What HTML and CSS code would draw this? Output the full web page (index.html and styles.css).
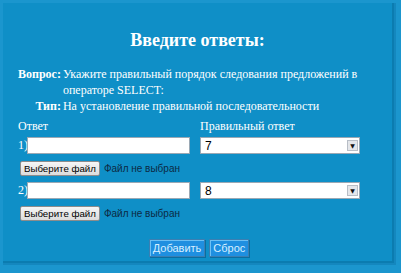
FILE: index.html
```html
<!DOCTYPE html>
<html lang="ru">
  <head>
    <meta charset="UTF-8" />
    <title>Введите ответы</title>
    <link rel="stylesheet" href="styles.css">
  </head>
  <body>
    <div class="panel">
      <h1 class="title">Введите ответы:</h1>

      <table class="info">
        <tr>
          <th>Вопрос:</th>
          <td>Укажите правильный порядок следования предложений в операторе SELECT:</td>
        </tr>
        <tr>
          <th>Тип:</th>
          <td>На установление правильной последовательности</td>
        </tr>
      </table>

      <form class="answers">
        <div class="col-head">Ответ</div>
        <div class="col-head">Правильный ответ</div>

        <div class="answer">
          <span class="num">1)</span>
          <input type="text" class="text-field">
        </div>
        <div class="select-wrap">
          <select class="pick"><option>7</option></select>
          <span class="arrow">&#9660;</span>
        </div>
        <div class="file-row">
          <button type="button" class="file-btn">Выберите файл</button>
          <span class="file-name">Файл не выбран</span>
        </div>

        <div class="answer">
          <span class="num">2)</span>
          <input type="text" class="text-field">
        </div>
        <div class="select-wrap">
          <select class="pick"><option>8</option></select>
          <span class="arrow">&#9660;</span>
        </div>
        <div class="file-row">
          <button type="button" class="file-btn">Выберите файл</button>
          <span class="file-name">Файл не выбран</span>
        </div>
      </form>

      <div class="actions">
        <button type="button" class="action-btn">Добавить</button>
        <button type="button" class="action-btn">Сброс</button>
      </div>
    </div>
  </body>
</html>
```

FILE: styles.css
```css
body {
  margin: 0;
  background-color: #1b96ce;
  font-family: "Liberation Serif", "Times New Roman", serif;
  color: #fff;
  font-size: 12px;
}
.panel {
  margin: 3px 9px 10px 3px;
  height: 258px;
  box-sizing: border-box;
  background-color: #0f8fc7;
  box-shadow: 1px 1px 0 1px #0b7cb0, 2px 2px 0 2px #1487be;
  padding: 1px 15px 0 15px;
}
.title {
  margin: 26px 0 0 0;
  text-align: center;
  font-size: 18px;
  line-height: 20px;
  font-weight: bold;
}
.info {
  border-collapse: collapse;
  margin-top: 16px;
}
.info th {
  text-align: right;
  vertical-align: top;
  padding: 0 2px 0 0;
  font-weight: bold;
  white-space: nowrap;
  line-height: 16px;
}
.info td {
  padding: 0;
  line-height: 16px;
  width: 300px;
}
.answers {
  display: grid;
  grid-template-columns: 182px 160px;
  margin-top: 4px;
}
.col-head {
  line-height: 16px;
  margin-bottom: 3px;
}
.answer {
  display: flex;
  align-items: center;
}
.num {
  width: 9px;
  line-height: 17px;
}
.text-field {
  width: 163px;
  height: 17px;
  box-sizing: border-box;
  border: 1px solid #9aa8b4;
  margin: 0;
  padding: 0 2px;
  background: #fff;
}
.select-wrap {
  position: relative;
  width: 160px;
  height: 17px;
}
.pick {
  appearance: none;
  -webkit-appearance: none;
  width: 160px;
  height: 17px;
  box-sizing: border-box;
  border: 1px solid #9aa8b4;
  border-radius: 0;
  margin: 0;
  padding: 0 4px;
  background: #fff;
  font-family: "Liberation Sans", Arial, sans-serif;
  font-size: 12px;
  color: #000;
}
.arrow {
  position: absolute;
  right: 2px;
  top: 3px;
  width: 11px;
  height: 11px;
  background: #e4e6ea;
  border: 1px solid #b8bec6;
  box-sizing: border-box;
  color: #111;
  font-family: "DejaVu Sans", sans-serif;
  font-size: 6px;
  line-height: 9px;
  text-align: center;
}
.file-row {
  grid-column: 1 / 3;
  display: flex;
  align-items: center;
  padding: 7px 0 6px 2px;
  font-family: "Liberation Sans", Arial, sans-serif;
}
.file-btn {
  font-family: "Liberation Sans", Arial, sans-serif;
  font-size: 9.7px;
  color: #000;
  background: linear-gradient(#f6f6f6, #dcdcdc);
  border: 1px solid #8c8c8c;
  border-radius: 2px;
  height: 15px;
  padding: 0 3px;
  margin: 0 4px 0 0;
  line-height: 13px;
}
.file-name {
  color: #0c2a44;
  font-size: 10px;
}
.actions {
  display: flex;
  justify-content: center;
  gap: 4px;
  margin-top: 12px;
  padding-left: 3px;
}
.action-btn {
  font-family: "Liberation Sans", Arial, sans-serif;
  font-size: 11px;
  color: #d8efff;
  background: #1f8fe0;
  border: 1px solid #3a7fb2;
  box-shadow: inset 1px 1px 0 #6cc0f4, 1px 1px 0 #0a6da0;
  height: 18px;
  padding: 0 3px;
  margin: 0;
}
```
